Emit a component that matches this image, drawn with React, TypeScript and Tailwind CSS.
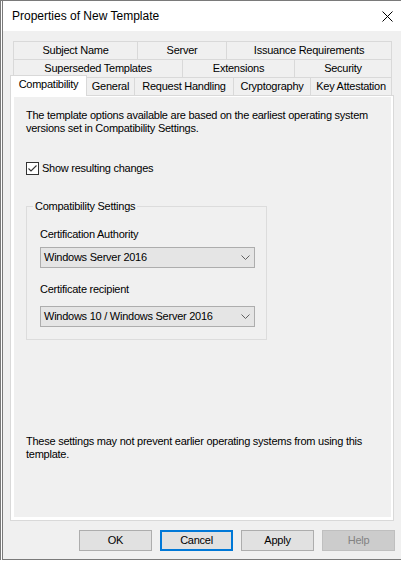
import React from "react";

function Tab({ w, label, last }: { w: string; label: string; last?: boolean }) {
  return (
    <div
      className={`${w} h-[18px] border-l border-t border-[#d9d9d9] ${last ? "border-r" : ""} flex items-center justify-center whitespace-nowrap`}
    >
      {label}
    </div>
  );
}

function TabR({ w, label }: { w: string; label: string }) {
  return (
    <div className={`${w} h-[18px] border-t border-r border-[#d9d9d9] flex items-center justify-center whitespace-nowrap`}>
      {label}
    </div>
  );
}

function Chevron() {
  return (
    <svg width="9" height="5" viewBox="0 0 9 5" className="shrink-0">
      <path d="M0.5 0.5 L4.5 4.5 L8.5 0.5" fill="none" stroke="#606060" strokeWidth="1" />
    </svg>
  );
}

function Select({ value }: { value: string }) {
  return (
    <div className="w-[215px] h-[21px] border border-[#adadad] bg-[#e5e5e5] flex items-center justify-between pl-[3px] pr-[4px] whitespace-nowrap">
      <span>{value}</span>
      <Chevron />
    </div>
  );
}

function Button({ label, variant }: { label: string; variant?: "focus" | "disabled" }) {
  const cls =
    variant === "focus"
      ? "border-2 border-[#0078d7] bg-[#e1e1e1] text-black"
      : variant === "disabled"
      ? "border border-[#bfbfbf] bg-[#cccccc] text-[#838383]"
      : "border border-[#adadad] bg-[#e1e1e1] text-black";
  return (
    <div className={`w-[73px] h-[21px] flex items-center justify-center ${cls}`}>{label}</div>
  );
}

export default function App() {
  return (
    <div className="w-[401px] h-[563px] bg-white font-['Liberation_Sans',Arial,sans-serif] text-[11px] tracking-[-0.25px] leading-[13px] text-black overflow-hidden">
      <div className="h-[560px] border-l border-t border-[#7a7a7a] pl-px bg-white">
        <div className="h-full border-l border-b border-[#7a7a7a] flex flex-col">
          <div className="h-[30px] bg-white flex items-center justify-between pl-[9px] pr-[8px] shrink-0">
            <span className="text-[12px] tracking-normal">Properties of New Template</span>
            <svg width="11" height="11" viewBox="0 0 11 11">
              <path d="M0.5 0.5 L10.5 10.5 M10.5 0.5 L0.5 10.5" stroke="#000" strokeWidth="1" />
            </svg>
          </div>
          <div className="flex-1 bg-[#f0f0f0] flex flex-col pt-[10px]">
            <div className="flex ml-[10px]">
              <Tab w="w-[124px]" label="Subject Name" />
              <Tab w="w-[89px]" label="Server" />
              <Tab w="w-[166px]" label="Issuance Requirements" last />
            </div>
            <div className="flex ml-[10px]">
              <Tab w="w-[169px]" label="Superseded Templates" />
              <Tab w="w-[112px]" label="Extensions" />
              <Tab w="w-[98px]" label="Security" last />
            </div>
            <div className="flex items-start h-[18px] ml-[7px]">
              <div className="relative z-10 -mt-[2px] h-[21px] w-[77px] border-l border-r border-t border-[#d9d9d9] bg-white flex justify-center leading-[17px] whitespace-nowrap">
                Compatibility
              </div>
              <TabR w="w-[48px]" label="General" />
              <TabR w="w-[99px]" label="Request Handling" />
              <TabR w="w-[77px]" label="Cryptography" />
              <TabR w="w-[81px]" label="Key Attestation" />
            </div>
            <div className="ml-[7px] w-[384px] h-[426px] border border-[#d9d9d9] bg-white pt-px pl-[3px] pr-[2px] pb-[3px]">
              <div className="h-full bg-[#f0f0f0] pl-[12px] pt-[12px] flex flex-col">
                <div className="whitespace-nowrap">
                  The template options available are based on the earliest operating system
                  <br />
                  versions set in Compatibility Settings.
                </div>
                <div className="mt-[27px] h-[13px] flex items-center gap-[3px]">
                  <div className="w-[13px] h-[13px] border border-[#333333] bg-white flex items-center justify-center">
                    <svg width="11" height="11" viewBox="0 0 11 11">
                      <path d="M1.5 5.5 L4 8 L9.5 2.5" fill="none" stroke="#333333" strokeWidth="1.1" />
                    </svg>
                  </div>
                  <span>Show resulting changes</span>
                </div>
                <div className="mt-[31px] w-[241px] h-[134px] border border-[#dcdcdc] flex flex-col">
                  <div className="-mt-[7px] ml-[6px] px-[2px] w-fit bg-[#f0f0f0] whitespace-nowrap">
                    Compatibility Settings
                  </div>
                  <div className="pl-[13px] flex flex-col">
                    <div className="mt-[15px]">Certification Authority</div>
                    <div className="mt-[6px]">
                      <Select value="Windows Server 2016" />
                    </div>
                    <div className="mt-[15px]">Certificate recipient</div>
                    <div className="mt-[10px]">
                      <Select value="Windows 10 / Windows Server 2016" />
                    </div>
                  </div>
                </div>
                <div className="mt-[95px] whitespace-nowrap">
                  These settings may not prevent earlier operating systems from using this
                  <br />
                  template.
                </div>
              </div>
            </div>
            <div className="mt-[9px] flex justify-end gap-[8px] pr-[6px]">
              <Button label="OK" />
              <Button label="Cancel" variant="focus" />
              <Button label="Apply" />
              <Button label="Help" variant="disabled" />
            </div>
          </div>
        </div>
      </div>
    </div>
  );
}
